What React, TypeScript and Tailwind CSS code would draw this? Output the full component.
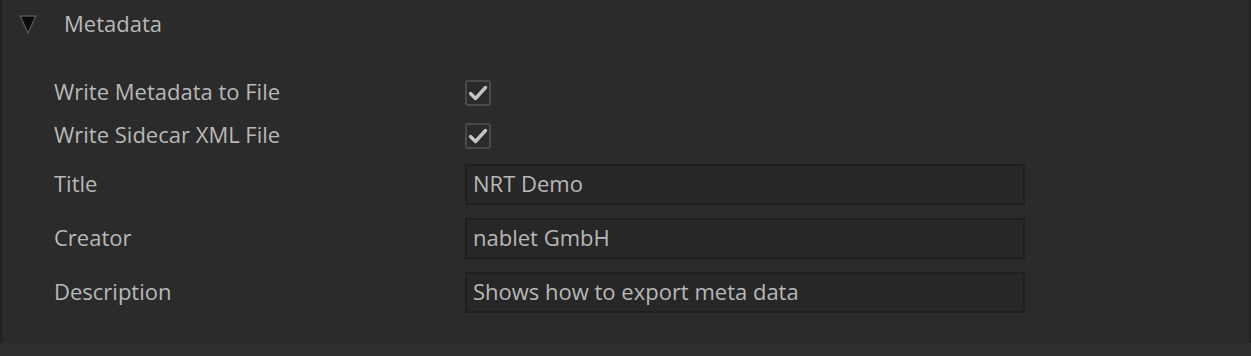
import React from "react";

const font = { fontFamily: '"Open Sans", "Noto Sans", sans-serif' };

function Check() {
  return (
    <div className="w-[26px] h-[26px] rounded-[3px] border-2 border-[#4a4a4a] bg-[#2a2a2a] flex items-center justify-center">
      <svg width="20" height="18" viewBox="0 0 20 18">
        <path d="M2.5 9.5 L7.5 14.5 L17.5 3.5" fill="none" stroke="#c4c4c4" strokeWidth="3.4" strokeLinecap="round" strokeLinejoin="round" />
      </svg>
    </div>
  );
}

function Field({ value }: { value: string }) {
  return (
    <div className="w-[560px] h-[41px] border-2 border-[#1f1f1f] bg-[#272727] flex items-center pl-[6px] pb-[2px] text-[22px] text-[#b8b8b8]">
      {value}
    </div>
  );
}

export default function App() {
  const checks = ["Write Metadata to File", "Write Sidecar XML File"];
  const fields: [string, string][] = [
    ["Title", "NRT Demo"],
    ["Creator", "nablet GmbH"],
    ["Description", "Shows how to export meta data"],
  ];
  return (
    <div className="w-[1251px] h-[356px] bg-[#2f2f2f]" style={font}>
      <div className="h-[343px] bg-[#2b2b2b] border-l-2 border-r-2 border-[#222222]">
        <div className="h-[48px] flex items-center">
          <svg className="ml-[17px]" width="18" height="19" viewBox="0 0 18 19">
            <polygon points="1,1 17,1 9,18" fill="#0b0b0b" stroke="#555555" strokeWidth="1.4" strokeLinejoin="miter" />
          </svg>
          <span className="ml-[27px] pb-[2px] text-[22px] text-[#b8b8b8]">Metadata</span>
        </div>
        <div className="pt-[23px]">
          {checks.map((c) => (
            <div key={c} className="h-[43px] flex items-center">
              <div className="w-[463px] pl-[52px] pb-[2px] text-[22px] text-[#b8b8b8]">{c}</div>
              <Check />
            </div>
          ))}
          {fields.map(([l, v]) => (
            <div key={l} className="h-[54px] flex items-center">
              <div className="w-[463px] pl-[52px] pb-[2px] text-[22px] text-[#b8b8b8]">{l}</div>
              <Field value={v} />
            </div>
          ))}
        </div>
      </div>
    </div>
  );
}
